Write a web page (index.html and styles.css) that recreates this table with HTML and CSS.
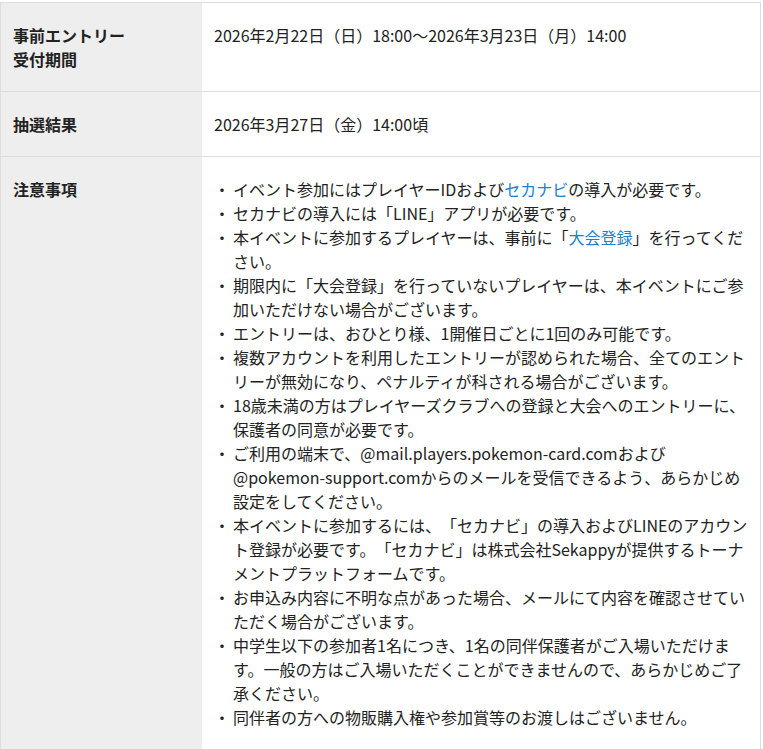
FILE: index.html
```html
<!DOCTYPE html>
<html lang="ja">
<head>
    <meta charset="UTF-8">
    <title>大会情報</title>
    <link rel="stylesheet" href="styles.css">
</head>
<body>
    <table class="info-table">
        <tr>
            <th>事前エントリー<br>受付期間</th>
            <td>2026年2月22日（日）18:00〜2026年3月23日（月）14:00</td>
        </tr>
        <tr>
            <th>抽選結果</th>
            <td>2026年3月27日（金）14:00頃</td>
        </tr>
        <tr>
            <th>注意事項</th>
            <td>
                <ul class="notes">
                    <li>イベント参加にはプレイヤーIDおよび<a href="#">セカナビ</a>の導入が必要です。</li>
                    <li>セカナビの導入には「LINE」アプリが必要です。</li>
                    <li>本イベントに参加するプレイヤーは、事前に「<a href="#">大会登録</a>」を行ってください。</li>
                    <li>期限内に「大会登録」を行っていないプレイヤーは、本イベントにご参加いただけない場合がございます。</li>
                    <li>エントリーは、おひとり様、1開催日ごとに1回のみ可能です。</li>
                    <li>複数アカウントを利用したエントリーが認められた場合、全てのエントリーが無効になり、ペナルティが科される場合がございます。</li>
                    <li>18歳未満の方はプレイヤーズクラブへの登録と大会へのエントリーに、保護者の同意が必要です。</li>
                    <li>ご利用の端末で、@mail.players.pokemon-card.comおよび@pokemon-support.comからのメールを受信できるよう、あらかじめ設定をしてください。</li>
                    <li>本イベントに参加するには、「セカナビ」の導入およびLINEのアカウント登録が必要です。「セカナビ」は株式会社Sekappyが提供するトーナメントプラットフォームです。</li>
                    <li>お申込み内容に不明な点があった場合、メールにて内容を確認させていただく場合がございます。</li>
                    <li>中学生以下の参加者1名につき、1名の同伴保護者がご入場いただけます。一般の方はご入場いただくことができませんので、あらかじめご了承ください。</li>
                    <li>同伴者の方への物販購入権や参加賞等のお渡しはございません。</li>
                </ul>
            </td>
        </tr>
    </table>
</body>
</html>
```

FILE: styles.css
```css
body {
    margin: 0;
    padding-top: 2px;
    font-family: "Noto Sans CJK JP", "Noto Sans", sans-serif;
    font-size: 16px;
    line-height: 24px;
    color: #222;
    background: #fff;
    text-spacing-trim: space-all;
}
.info-table {
    width: 761px;
    border-collapse: collapse;
}
.info-table th,
.info-table td {
    border-top: 1px solid #ddd;
    border-bottom: 1px solid #ddd;
    padding: 20px 12px;
    vertical-align: top;
    text-align: left;
}
.info-table th {
    width: 177px;
    background-color: #eee;
    font-weight: bold;
    border-left: 1px solid #ddd;
}
.info-table td {
    border-right: 1px solid #ddd;
}
.notes {
    list-style: none;
    margin: 0;
    padding: 0;
}
.notes li {
    padding-left: 19px;
    text-indent: -19px;
}
.notes li::before {
    content: "・";
    display: inline-block;
    width: 19px;
    text-indent: 0;
}
.notes a {
    color: #1a7fd0;
    text-decoration: none;
}
```
